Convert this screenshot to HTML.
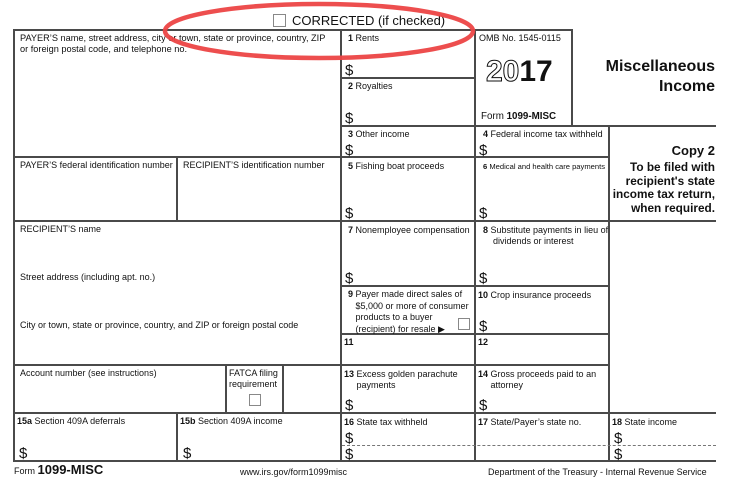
<!DOCTYPE html>
<html><head><style>
body{margin:0;width:730px;height:497px;background:#fff;position:relative;font-family:"Liberation Sans",Arial,sans-serif;color:#111;overflow:hidden}
.h{position:absolute;height:2px;background:#4a4a4a}
.v{position:absolute;width:2px;background:#4a4a4a}
.t{position:absolute;font-size:9px;line-height:11px;white-space:nowrap}
.t b{font-weight:bold}
.d{position:absolute;font-size:15px;line-height:15px}
.dash{position:absolute;height:0;border-top:1.5px dashed #777}
.cb{position:absolute;border:1.5px solid #888;background:#fff}
</style></head><body>
<div class="h" style="left:13px;top:29px;width:559px"></div>
<div class="h" style="left:13px;top:156px;width:596px"></div>
<div class="h" style="left:341px;top:77px;width:134px"></div>
<div class="h" style="left:341px;top:125px;width:375px"></div>
<div class="h" style="left:13px;top:220px;width:703px"></div>
<div class="h" style="left:341px;top:285px;width:268px"></div>
<div class="h" style="left:341px;top:333px;width:268px"></div>
<div class="h" style="left:13px;top:364px;width:596px"></div>
<div class="h" style="left:13px;top:412px;width:703px"></div>
<div class="h" style="left:13px;top:460px;width:703px"></div>
<div class="v" style="left:13px;top:29px;height:433px"></div>
<div class="v" style="left:340px;top:29px;height:433px"></div>
<div class="v" style="left:474px;top:29px;height:433px"></div>
<div class="v" style="left:571px;top:29px;height:97px"></div>
<div class="v" style="left:608px;top:125px;height:337px"></div>
<div class="v" style="left:176px;top:156px;height:65px"></div>
<div class="v" style="left:176px;top:412px;height:50px"></div>
<div class="v" style="left:225px;top:364px;height:49px"></div>
<div class="v" style="left:282px;top:364px;height:49px"></div>
<div class="dash" style="left:342px;top:445px;width:374px"></div>

<div class="cb" style="left:273px;top:14px;width:11px;height:11px"></div>
<div class="t" style="left:292px;top:13px;font-size:13px;line-height:15px">CORRECTED (if checked)</div>

<div class="t" style="left:20px;top:33px;font-size:9.2px">PAYER’S name, street address, city or town, state or province, country, ZIP<br>or foreign postal code, and telephone no.</div>
<div class="t" style="left:20px;top:160px">PAYER’S federal identification number</div>
<div class="t" style="left:183px;top:160px">RECIPIENT’S identification number</div>
<div class="t" style="left:20px;top:224px">RECIPIENT’S name</div>
<div class="t" style="left:20px;top:272px">Street address (including apt. no.)</div>
<div class="t" style="left:20px;top:320px">City or town, state or province, country, and ZIP or foreign postal code</div>
<div class="t" style="left:20px;top:368px">Account number (see instructions)</div>
<div class="t" style="left:229px;top:368px">FATCA filing<br>requirement</div>
<div class="cb" style="left:249px;top:394px;width:10px;height:10px"></div>
<div class="t" style="left:17px;top:416px"><b>15a</b> Section 409A deferrals</div>
<div class="t" style="left:180px;top:416px"><b>15b</b> Section 409A income</div>
<div class="d" style="left:19px;top:446px">$</div>
<div class="d" style="left:183px;top:446px">$</div>

<div class="t" style="left:348px;top:33px"><b>1</b> Rents</div>
<div class="d" style="left:345px;top:63px">$</div>
<div class="t" style="left:348px;top:81px"><b>2</b> Royalties</div>
<div class="d" style="left:345px;top:111px">$</div>
<div class="t" style="left:348px;top:129px"><b>3</b> Other income</div>
<div class="d" style="left:345px;top:143px">$</div>
<div class="t" style="left:348px;top:161px"><b>5</b> Fishing boat proceeds</div>
<div class="d" style="left:345px;top:206px">$</div>
<div class="t" style="left:348px;top:225px"><b>7</b> Nonemployee compensation</div>
<div class="d" style="left:345px;top:271px">$</div>
<div class="t" style="left:348px;top:289px;line-height:11.5px"><b>9</b> Payer made direct sales of<br>&nbsp;&nbsp;&nbsp;$5,000 or more of consumer<br>&nbsp;&nbsp;&nbsp;products to a buyer<br>&nbsp;&nbsp;&nbsp;(recipient) for resale ▶</div>
<div class="cb" style="left:458px;top:318px;width:10px;height:10px"></div>
<div class="t" style="left:344px;top:337px"><b>11</b></div>
<div class="t" style="left:344px;top:369px"><b>13</b> Excess golden parachute<br>&nbsp;&nbsp;&nbsp;&nbsp;&nbsp;payments</div>
<div class="d" style="left:345px;top:398px">$</div>
<div class="t" style="left:344px;top:417px"><b>16</b> State tax withheld</div>
<div class="d" style="left:345px;top:431px">$</div>
<div class="d" style="left:345px;top:447px">$</div>

<div class="t" style="left:479px;top:33px">OMB No. 1545-0115</div>
<div style="position:absolute;left:486px;top:56px;font-size:30px;font-weight:bold;line-height:32px"><span style="color:#fff;-webkit-text-stroke:1px #111">20</span>17</div>
<div class="t" style="left:481px;top:111px;font-size:9.8px">Form <b>1099-MISC</b></div>
<div class="t" style="left:483px;top:129px"><b>4</b> Federal income tax withheld</div>
<div class="d" style="left:479px;top:143px">$</div>
<div class="t" style="left:483px;top:161px;font-size:7.6px"><b>6</b> Medical and health care payments</div>
<div class="d" style="left:479px;top:206px">$</div>
<div class="t" style="left:483px;top:225px"><b>8</b> Substitute payments in lieu of<br>&nbsp;&nbsp;&nbsp;&nbsp;dividends or interest</div>
<div class="d" style="left:479px;top:271px">$</div>
<div class="t" style="left:478px;top:290px"><b>10</b> Crop insurance proceeds</div>
<div class="d" style="left:479px;top:319px">$</div>
<div class="t" style="left:478px;top:337px"><b>12</b></div>
<div class="t" style="left:478px;top:369px"><b>14</b> Gross proceeds paid to an<br>&nbsp;&nbsp;&nbsp;&nbsp;&nbsp;attorney</div>
<div class="d" style="left:479px;top:398px">$</div>
<div class="t" style="left:478px;top:417px"><b>17</b> State/Payer’s state no.</div>

<div style="position:absolute;right:15px;top:57px;text-align:right;font-size:16px;font-weight:bold;line-height:20px">Miscellaneous<br>Income</div>
<div style="position:absolute;right:15px;top:143px;text-align:right;font-size:13px;font-weight:bold;line-height:15px">Copy 2</div>
<div style="position:absolute;right:15px;top:161px;text-align:right;font-size:11.8px;font-weight:bold;line-height:13.5px">To be filed with<br>recipient's state<br>income tax return,<br>when required.</div>
<div class="t" style="left:612px;top:417px"><b>18</b> State income</div>
<div class="d" style="left:614px;top:431px">$</div>
<div class="d" style="left:614px;top:447px">$</div>

<div class="t" style="left:14px;top:464px;font-size:9px">Form <b style="font-size:13px">1099-MISC</b></div>
<div class="t" style="left:240px;top:467px">www.irs.gov/form1099misc</div>
<div class="t" style="left:488px;top:467px">Department of the Treasury - Internal Revenue Service</div>

<svg style="position:absolute;left:0;top:0" width="730" height="497"><ellipse cx="319" cy="31" rx="154" ry="27" fill="none" stroke="#ec4444" stroke-width="4.5" opacity="0.95"/></svg>
</body></html>
